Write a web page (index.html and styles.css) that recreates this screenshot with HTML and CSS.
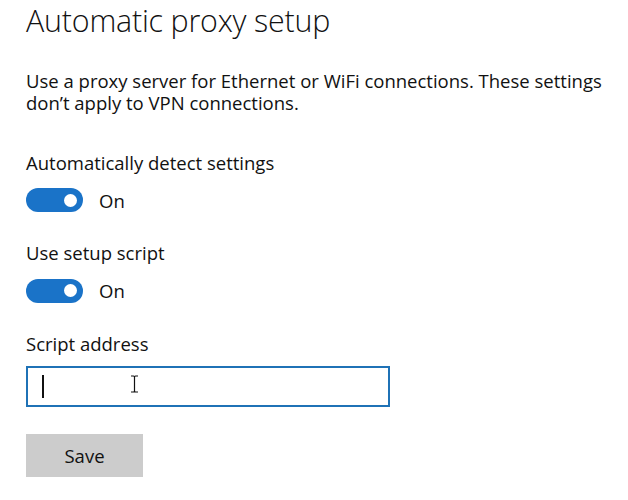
FILE: index.html
```html
<!DOCTYPE html>
<html>
<head>
<meta charset="utf-8">
<link rel="stylesheet" href="styles.css">
</head>
<body>
<main class="page">
  <h1 class="title">Automatic proxy setup</h1>
  <p class="desc">Use a proxy server for Ethernet or WiFi connections. These settings don’t apply to VPN connections.</p>

  <div class="setting first">
    <div class="label">Automatically detect settings</div>
    <div class="toggle-row">
      <span class="toggle"><span class="knob"></span></span>
      <span class="state">On</span>
    </div>
  </div>

  <div class="setting">
    <div class="label">Use setup script</div>
    <div class="toggle-row">
      <span class="toggle"><span class="knob"></span></span>
      <span class="state">On</span>
    </div>
  </div>

  <div class="setting">
    <div class="label">Script address</div>
    <div class="input">
      <span class="caret"></span>
      <svg class="ibeam" width="9" height="18" viewBox="0 0 9 18"><path d="M1 1h2.5c.6 0 1 .4 1 1v14c0 .6.4 1 1 1H8M8 1H5.5c-.6 0-1 .4-1 1M1 17h2.5c.6 0 1-.4 1-1" fill="none" stroke="#111" stroke-width="1.2"/></svg>
    </div>
  </div>

  <button class="save">Save</button>
</main>
</body>
</html>
```

FILE: styles.css
```css
html, body {
  margin: 0;
  padding: 0;
  background: #ffffff;
}
.page {
  padding: 0 0 0 26px;
  font-family: "Open Sans", "Noto Sans", sans-serif;
  color: #111111;
  display: flex;
  flex-direction: column;
  align-items: flex-start;
}
.title {
  margin: 0;
  font-weight: 300;
  font-size: 30.4px;
  line-height: 42px;
  letter-spacing: -0.2px;
}
.desc {
  margin: 28px 0 0 0;
  font-size: 18.5px;
  line-height: 22px;
  width: 598px;
}
.label {
  font-size: 18.5px;
  line-height: 23px;
  margin-top: 29px;
}
.setting.first .label {
  margin-top: 36.5px;
}
.toggle-row {
  display: flex;
  align-items: center;
  gap: 16px;
  margin-top: 14.5px;
}
.toggle {
  width: 57px;
  height: 24px;
  border-radius: 12px;
  background: #1a73c8;
  display: flex;
  align-items: center;
  justify-content: flex-end;
  padding-right: 6px;
  box-sizing: border-box;
}
.knob {
  width: 13px;
  height: 13px;
  border-radius: 50%;
  background: #ffffff;
}
.state {
  font-size: 18.5px;
  line-height: 23px;
}
.input {
  margin-top: 11.5px;
  width: 364px;
  height: 41px;
  box-sizing: border-box;
  border: 2px solid #1f72b6;
  display: flex;
  align-items: center;
  padding-left: 14px;
  gap: 86px;
}
.caret {
  width: 1.5px;
  height: 23px;
  background: #111;
}
.ibeam {
  margin-top: -6px;
}
.save {
  margin-top: 26.5px;
  width: 117px;
  height: 43px;
  border: none;
  background: #cccccc;
  font-family: "Open Sans", "Noto Sans", sans-serif;
  font-size: 18.5px;
  color: #111;
  padding: 0;
}
```
